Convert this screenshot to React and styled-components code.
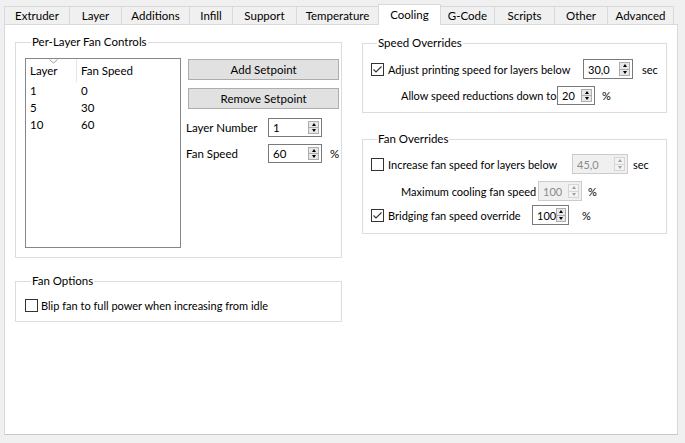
import React from "react";
import styled, { createGlobalStyle, css } from "styled-components";

const GlobalStyle = createGlobalStyle`
  html, body {
    margin: 0;
    padding: 0;
    background: #f0f0f0;
  }
  body {
    font-family: Lato, "Noto Sans", sans-serif;
    font-size: 11px;
    color: #000;
  }
`;

const Window = styled.div`
  width: 685px;
  height: 443px;
  box-sizing: border-box;
  padding: 4px 7px 8px 4px;
  display: flex;
  flex-direction: column;
  background: #f0f0f0;
`;

const TabBar = styled.div`
  display: flex;
  align-items: flex-end;
  height: 20px;
`;

const Tab = styled.div`
  box-sizing: border-box;
  width: ${({ $w }) => $w}px;
  height: 18px;
  margin-left: -1px;
  border: 1px solid #d9d9d9;
  border-bottom: none;
  background: #f0f0f0;
  text-align: center;
  line-height: 16px;
  padding-top: 1px;
  white-space: nowrap;
  font-size: 11.5px;

  &:first-child {
    margin-left: 0;
  }

  ${({ $active }) =>
    $active &&
    css`
      position: relative;
      z-index: 1;
      height: 21px;
      margin-bottom: -1px;
      padding-top: 2px;
      background: #fff;
    `}
`;

const Panel = styled.div`
  flex: 1;
  background: #fff;
  border: 1px solid #d9d9d9;
  border-bottom-color: #c9c9c9;
  padding: 9px 10px 0 10px;
  display: flex;
  gap: 20px;
  align-items: flex-start;
`;

const Column = styled.div`
  display: flex;
  flex-direction: column;
  width: ${({ $w }) => $w}px;
  margin-top: ${({ $top }) => $top || 0}px;
`;

const Group = styled.fieldset`
  margin: ${({ $gap }) => $gap || 0}px 0 0 0;
  padding: ${({ $pad }) => $pad};
  border: 1px solid #dcdcdc;
  min-width: 0;
`;

const Legend = styled.legend`
  margin-left: 6px;
  padding: 0 1px;
  line-height: 16px;
  font-size: 11.5px;
`;

const ListBox = styled.div`
  box-sizing: border-box;
  width: 156px;
  height: 190px;
  border: 1px solid #828790;
  background: #fff;
  flex-shrink: 0;
`;

const HeaderRow = styled.div`
  position: relative;
  display: flex;
  height: 23px;
  align-items: center;
  font-size: 11.5px;
`;

const SortMark = styled.svg`
  position: absolute;
  left: 23px;
  top: 0;
`;

const Cell = styled.div`
  box-sizing: border-box;
  width: ${({ $w }) => ($w ? `${$w}px` : "auto")};
  flex: ${({ $w }) => ($w ? "none" : 1)};
  padding-left: 4px;
  height: 100%;
  display: flex;
  align-items: center;
  border-right: ${({ $div }) => ($div ? "1px solid #e5e5e5" : "none")};
`;

const DataRow = styled.div`
  display: flex;
  height: 17px;
  font-size: 11.5px;
`;

const SideControls = styled.div`
  display: flex;
  flex-direction: column;
  margin-left: 5px;
  flex: 1;
`;

const Button = styled.button`
  box-sizing: border-box;
  height: 21px;
  margin: ${({ $top }) => $top}px 0 0 2px;
  border: 1px solid #adadad;
  background: #e1e1e1;
  font: inherit;
  font-size: 11.5px;
  color: #000;
  padding: 0;
  line-height: 19px;
`;

const FormGrid = styled.div`
  display: grid;
  grid-template-columns: 74px 54px auto;
  column-gap: 8px;
  row-gap: 7px;
  margin-top: 9px;
  align-items: center;
  font-size: 11.5px;
`;

const Row = styled.div`
  display: flex;
  align-items: center;
  height: ${({ $h }) => $h || 20}px;
  margin-top: ${({ $top }) => $top || 0}px;
  padding-left: ${({ $indent }) => $indent || 0}px;
`;

const Label = styled.span`
  white-space: nowrap;
  width: ${({ $w }) => ($w ? `${$w}px` : "auto")};
  flex: none;
  margin-left: ${({ $ml }) => $ml || 0}px;
`;

const Box = styled.div`
  box-sizing: border-box;
  width: 13px;
  height: 13px;
  border: 1px solid #333;
  background: #fff;
  flex: none;
  display: flex;
  align-items: center;
  justify-content: center;
`;

const SpinWrap = styled.div`
  box-sizing: border-box;
  width: ${({ $w }) => $w}px;
  height: ${({ $h }) => $h || 19}px;
  border: 1px solid ${({ $off }) => ($off ? "#cccccc" : "#7a7a7a")};
  background: ${({ $off }) => ($off ? "#f0f0f0" : "#fff")};
  color: ${({ $off }) => ($off ? "#8a8a8a" : "#000")};
  display: flex;
  align-items: center;
  padding: 2px 2px 2px 4px;
  flex: none;
`;

const SpinText = styled.span`
  flex: 1;
`;

const SpinButtons = styled.div`
  box-sizing: border-box;
  width: 11px;
  height: 100%;
  border: 1px solid ${({ $off }) => ($off ? "#d6d6d6" : "#adadad")};
  background: ${({ $off }) => ($off ? "#f3f3f3" : "#e8e8e8")};
  display: flex;
  flex-direction: column;
`;

const Half = styled.div`
  flex: 1;
  display: flex;
  align-items: center;
  justify-content: center;
  border-top: ${({ $lower, $off }) =>
    $lower ? `1px solid ${$off ? "#d6d6d6" : "#adadad"}` : "none"};
`;

const Arrow = styled.div`
  width: 0;
  height: 0;
  border-left: 2.5px solid transparent;
  border-right: 2.5px solid transparent;
  ${({ $down, $off }) =>
    $down
      ? `border-top: 3px solid ${$off ? "#a0a0a0" : "#000"};`
      : `border-bottom: 3px solid ${$off ? "#a0a0a0" : "#000"};`}
`;

function Spin({ value, w, h, off }) {
  return (
    <SpinWrap $w={w} $h={h} $off={off}>
      <SpinText>{value}</SpinText>
      <SpinButtons $off={off}>
        <Half>
          <Arrow $off={off} />
        </Half>
        <Half $lower $off={off}>
          <Arrow $down $off={off} />
        </Half>
      </SpinButtons>
    </SpinWrap>
  );
}

function Check({ checked }) {
  return (
    <Box>
      {checked && (
        <svg width="11" height="11" viewBox="0 0 11 11">
          <polyline
            points="1.5,5.5 4,8 9.5,2.5"
            fill="none"
            stroke="#333"
            strokeWidth="1.1"
          />
        </svg>
      )}
    </Box>
  );
}

const tabs = [
  ["Extruder", 66],
  ["Layer", 53],
  ["Additions", 69],
  ["Infill", 44],
  ["Support", 65],
  ["Temperature", 83],
  ["Cooling", 63],
  ["G-Code", 55],
  ["Scripts", 61],
  ["Other", 54],
  ["Advanced", 67],
];

const setpoints = [
  ["1", "0"],
  ["5", "30"],
  ["10", "60"],
];

export default function App() {
  return (
    <>
      <GlobalStyle />
      <Window>
        <TabBar>
          {tabs.map(([name, w]) => (
            <Tab key={name} $w={w} $active={name === "Cooling"}>
              {name}
            </Tab>
          ))}
        </TabBar>
        <Panel>
          <Column $w={327}>
            <Group $pad="8px 10px 9px 9px">
              <Legend>Per-Layer Fan Controls</Legend>
              <div style={{ display: "flex" }}>
                <ListBox>
                  <HeaderRow>
                    <SortMark width="9" height="5" viewBox="0 0 9 5">
                      <polyline
                        points="0.5,0.5 4.5,4 8.5,0.5"
                        fill="none"
                        stroke="#9a9a9a"
                        strokeWidth="1"
                      />
                    </SortMark>
                    <Cell $w={51} $div>
                      Layer
                    </Cell>
                    <Cell>Fan Speed</Cell>
                  </HeaderRow>
                  {setpoints.map(([layer, speed]) => (
                    <DataRow key={layer}>
                      <Cell $w={51}>{layer}</Cell>
                      <Cell>{speed}</Cell>
                    </DataRow>
                  ))}
                </ListBox>
                <SideControls>
                  <Button $top={1}>Add Setpoint</Button>
                  <Button $top={8}>Remove Setpoint</Button>
                  <FormGrid>
                    <Label>Layer Number</Label>
                    <Spin value="1" w={54} />
                    <span />
                    <Label>Fan Speed</Label>
                    <Spin value="60" w={54} />
                    <Label>%</Label>
                  </FormGrid>
                </SideControls>
              </div>
            </Group>
            <Group $gap={15} $pad="8px 9px 8px 9px">
              <Legend>Fan Options</Legend>
              <Row $h={16}>
                <Check />
                <Label $ml={3}>Blip fan to full power when increasing from idle</Label>
              </Row>
            </Group>
          </Column>
          <Column $w={306} $top={1}>
            <Group $pad="8px 8px 7px 8px">
              <Legend>Speed Overrides</Legend>
              <Row>
                <Check checked />
                <Label $ml={4} $w={195}>
                  Adjust printing speed for layers below
                </Label>
                <Spin value="30,0" w={50} h={20} />
                <Label $ml={9}>sec</Label>
              </Row>
              <Row $top={7} $h={19} $indent={30}>
                <Label $w={156}>Allow speed reductions down to</Label>
                <Spin value="20" w={38} />
                <Label $ml={7}>%</Label>
              </Row>
            </Group>
            <Group $gap={18} $pad="7px 8px 8px 8px">
              <Legend>Fan Overrides</Legend>
              <Row>
                <Check />
                <Label $ml={4} $w={184}>
                  Increase fan speed for layers below
                </Label>
                <Spin value="45,0" w={56} h={20} off />
                <Label $ml={5}>sec</Label>
              </Row>
              <Row $top={7} $indent={30}>
                <Label $w={137}>Maximum cooling fan speed</Label>
                <Spin value="100" w={44} h={20} off />
                <Label $ml={6}>%</Label>
              </Row>
              <Row $top={4}>
                <Check checked />
                <Label $ml={4} $w={144}>
                  Bridging fan speed override
                </Label>
                <Spin value="100" w={37} h={20} />
                <Label $ml={13}>%</Label>
              </Row>
            </Group>
          </Column>
        </Panel>
      </Window>
    </>
  );
}
